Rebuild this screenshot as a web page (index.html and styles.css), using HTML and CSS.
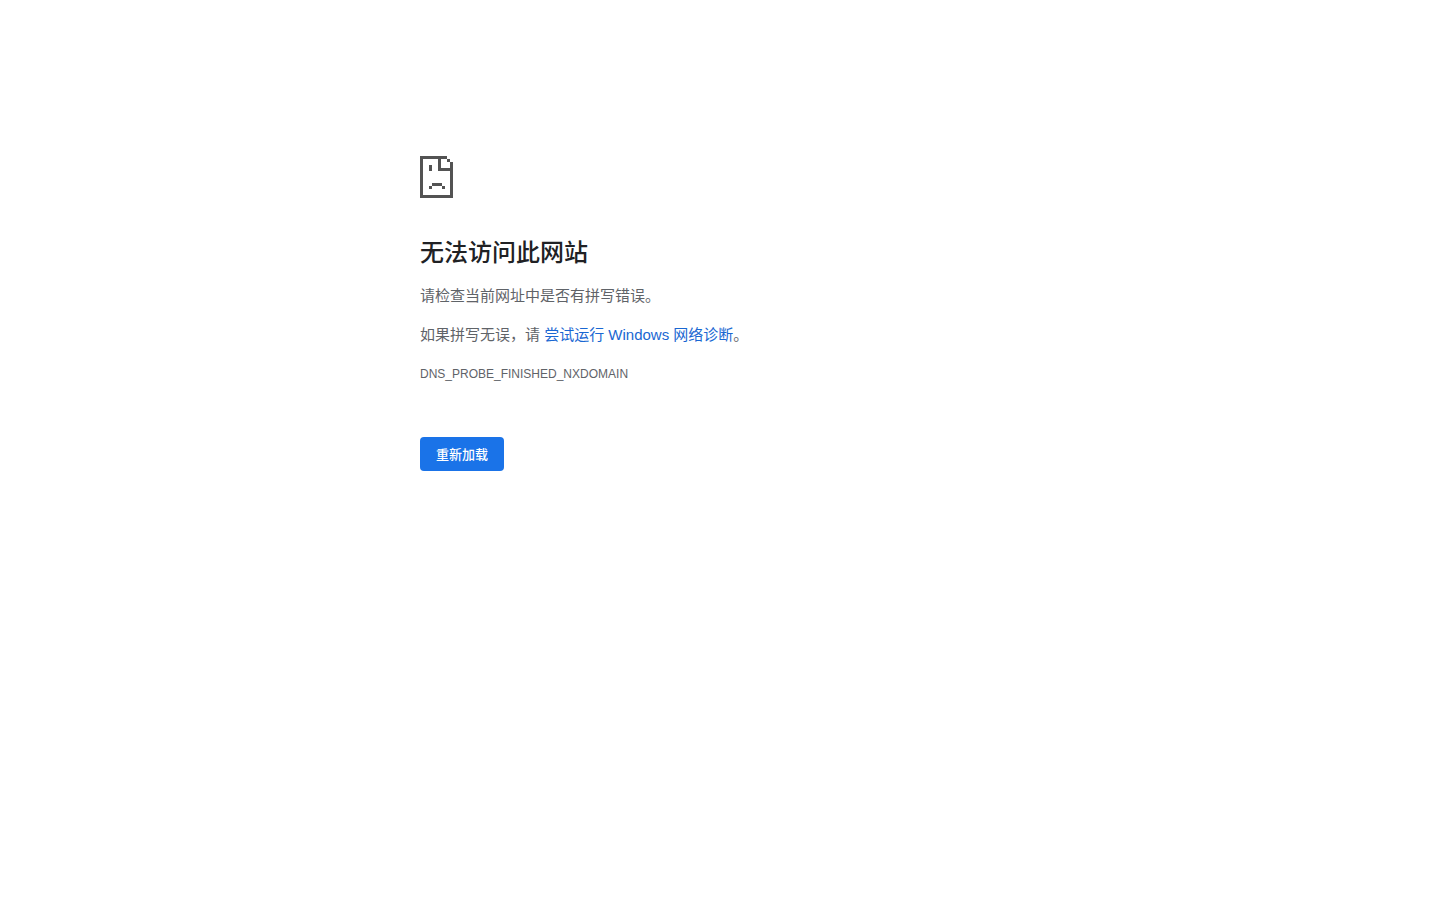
FILE: index.html
```html
<!DOCTYPE html>
<html lang="zh-CN">
	<head>
		<meta charset="UTF-8">
		<title>无法访问此网站</title>
		<link rel="stylesheet" href="styles.css">
	</head>
	<body>

		<main class="error">
			<svg class="error-icon" viewBox="0 0 33 42" shape-rendering="crispEdges" aria-hidden="true">
				<!-- page outline and folded corner -->
				<path d="M0 0h27v3h3v3h3v36H0zM3 3v36h27V15H18V3zM21 3v9h9V6h-3V3z" fill-rule="evenodd"/>
				<!-- face -->
				<path d="M9 9h3v6H9zM12 27h10v3H12zM9 30h3v3H9zM22 30h3v3h-3z"/>
			</svg>
			<h1>无法访问此网站</h1>
			<p>请检查当前网址中是否有拼写错误。</p>
			<p>如果拼写无误，请 <a href="#">尝试运行 Windows 网络诊断</a>。</p>
			<p class="code">DNS_PROBE_FINISHED_NXDOMAIN</p>
			<button type="button" class="reload">重新加载</button>
		</main>
	</body>
</html>
```

FILE: styles.css
```css
* {
	margin: 0;
	padding: 0;
	box-sizing: border-box;
}

body {
	background: #fff;
	color: #5f6368;
	font-family: "Liberation Sans", "Noto Sans CJK SC", sans-serif;
	font-size: 15px;
	line-height: 24px;
}

.error {
	max-width: 600px;
	margin: 0 auto;
	padding-top: 156px;
}

.error-icon {
	display: block;
	width: 33px;
	height: 42px;
	margin-bottom: 40px;
	fill: #535353;
}

h1 {
	margin-bottom: 16px;
	color: #202124;
	font-size: 24px;
	font-weight: 500;
	line-height: 30px;
}

p {
	margin-bottom: 15px;
}

a {
	color: #1967d2;
	text-decoration: none;
}

.code {
	font-size: 12px;
}

.reload {
	height: 34px;
	margin-top: 36px;
	padding: 0 16px 2px;
	border: 0;
	border-radius: 4px;
	background: #1a73e8;
	color: #fff;
	font-family: inherit;
	font-size: 13px;
	font-weight: 500;
	cursor: pointer;
}
```
